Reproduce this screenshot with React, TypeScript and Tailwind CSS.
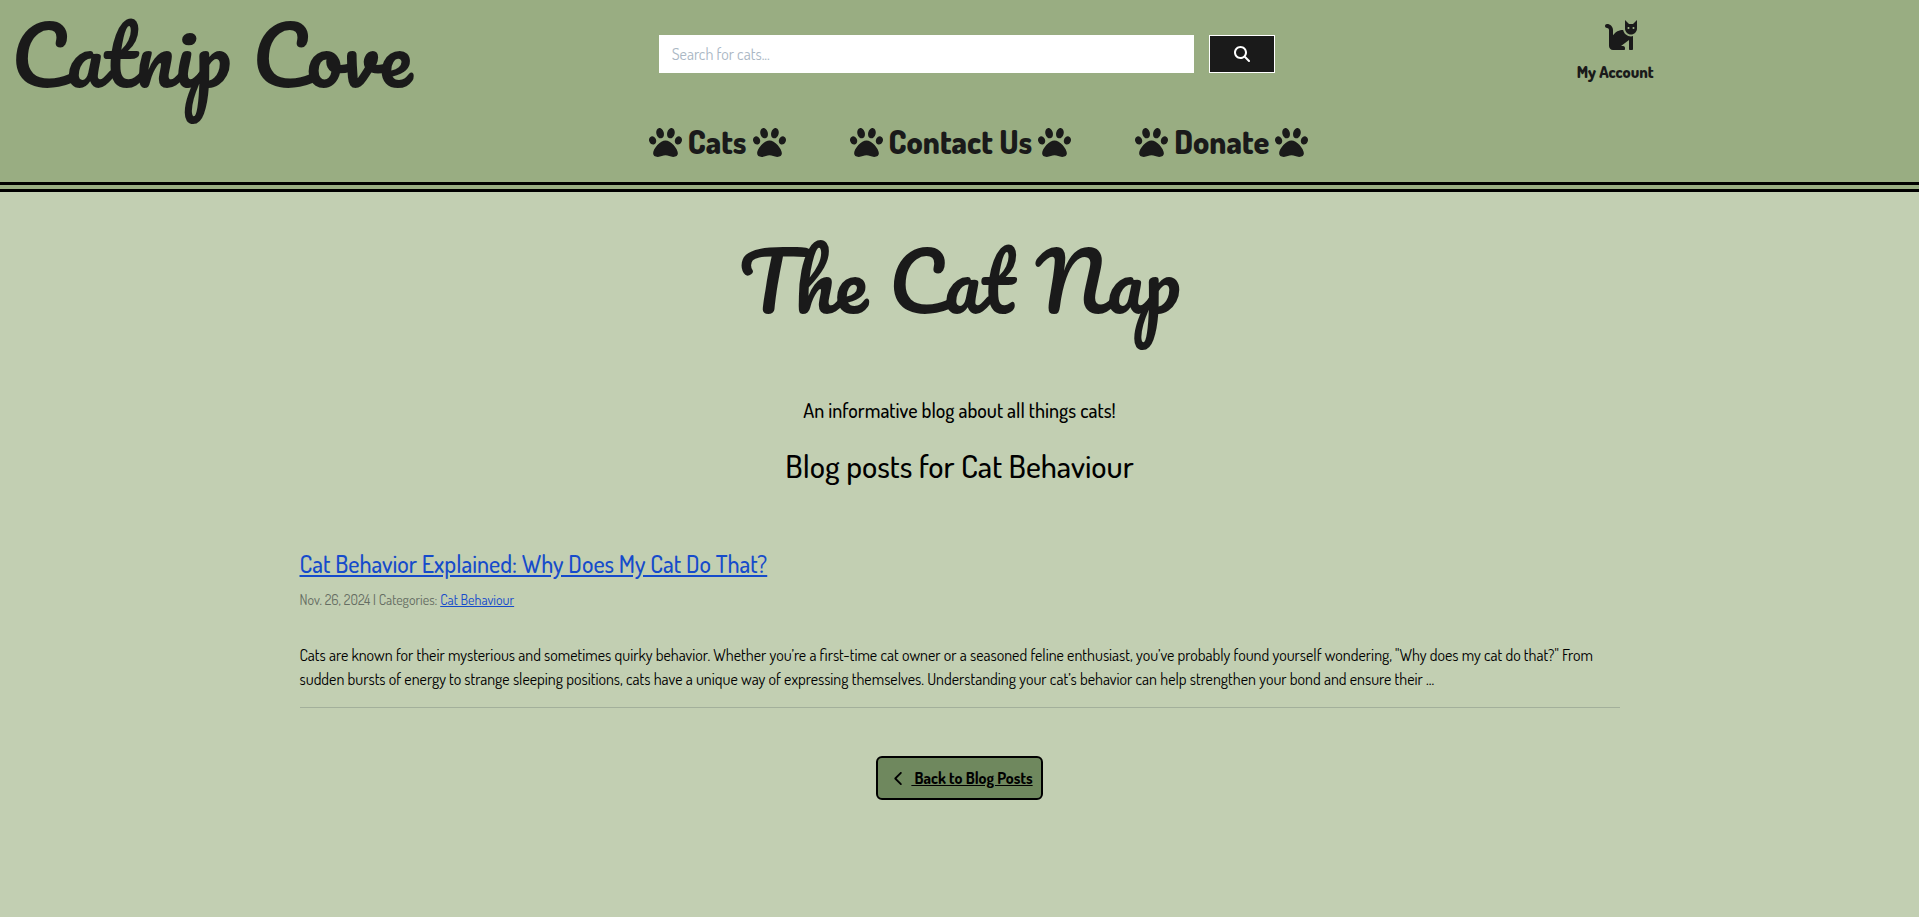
import { FaCat, FaPaw } from "react-icons/fa";
import { FaChevronLeft, FaMagnifyingGlass } from "react-icons/fa6";

const links = ["Cats", "Contact Us", "Donate"];

export default function App() {
  return (
    <div className="flex min-h-screen flex-col bg-[#c2cfb2] font-['Dosis','Lato',sans-serif] text-base leading-6 text-black">
      <header className="h-48 border-b-[10px] border-double border-black bg-[#99ad82] text-[#1a1a1a]">
        <div className="grid h-[122px] grid-cols-3 items-start">
          <a href="#home" className="pl-[11px] font-['Pacifico','Lato',cursive] text-[80px] leading-[108px] whitespace-nowrap">
            Catnip Cove
          </a>
          <form className="flex items-center gap-[15px] pl-[19px] pr-1 pt-[35px]" onSubmit={(e) => e.preventDefault()}>
            <input
              type="search"
              aria-label="Search for cats"
              placeholder="Search for cats..."
              className="h-[38px] min-w-0 flex-1 bg-white px-[13px] placeholder:text-[#aab7c4]"
            />
            <button type="submit" aria-label="Search" className="flex h-[38px] w-[66px] items-center justify-center border border-white bg-[#1a1a1a] text-white">
              <FaMagnifyingGlass className="size-4" />
            </button>
          </form>
          <div className="flex justify-center pl-8 pt-[18px]">
            <a href="#account" className="flex flex-col items-center gap-[10px] font-extrabold">
              <FaCat className="ml-3 size-8" />
              My Account
            </a>
          </div>
        </div>
        <nav className="flex justify-center gap-16 pl-[38px] text-[32px] font-extrabold leading-10">
          {links.map((link) => (
            <a key={link} href="#nav" className="flex items-center gap-1.5">
              <FaPaw className="size-[33px]" />
              {link}
              <FaPaw className="size-[33px]" />
            </a>
          ))}
        </nav>
      </header>

      <main className="mx-auto w-full max-w-[1320px]">
        <h1 className="pt-7 text-center font-['Pacifico','Liberation_Serif',cursive] text-[80px] leading-[120px] text-[#1a1a1a]">
          The Cat Nap
        </h1>
        <p className="pt-[55px] text-center text-xl font-medium leading-[30px]">An informative blog about all things cats!</p>
        <h2 className="pt-[22px] text-center text-[32px] font-medium leading-[38px]">Blog posts for Cat Behaviour</h2>
        <article className="mt-[64px] border-b border-[#a3b09b] pb-4">
          <h3 className="text-2xl font-medium leading-[30px]">
            <a href="#post" className="text-[#164bcb] underline">Cat Behavior Explained: Why Does My Cat Do That?</a>
          </h3>
          <p className="pt-[9px] text-sm leading-6 text-[#656d62]">
            Nov. 26, 2024 | Categories:{" "}
            <a href="#category" className="text-[#164bcb] underline">Cat Behaviour</a>
          </p>
          <p className="pt-[31px] text-black">
            Cats are known for their mysterious and sometimes quirky behavior. Whether you’re a first-time cat owner or a seasoned feline enthusiast, you’ve probably found yourself wondering, "Why does my cat do that?" From sudden bursts of energy to strange sleeping positions, cats have a unique way of expressing themselves. Understanding your cat’s behavior can help strengthen your bond and ensure their ...
          </p>
        </article>
        <div className="flex justify-center pt-12">
          <a href="#posts" className="flex h-11 items-center whitespace-pre rounded-md border-2 border-black bg-[#6f885e] pl-4 pr-2 font-bold">
            <FaChevronLeft className="mr-[7px] h-[15px] w-2.5" />
            <span className="underline"> Back to Blog Posts</span>
          </a>
        </div>
      </main>
    </div>
  );
}
